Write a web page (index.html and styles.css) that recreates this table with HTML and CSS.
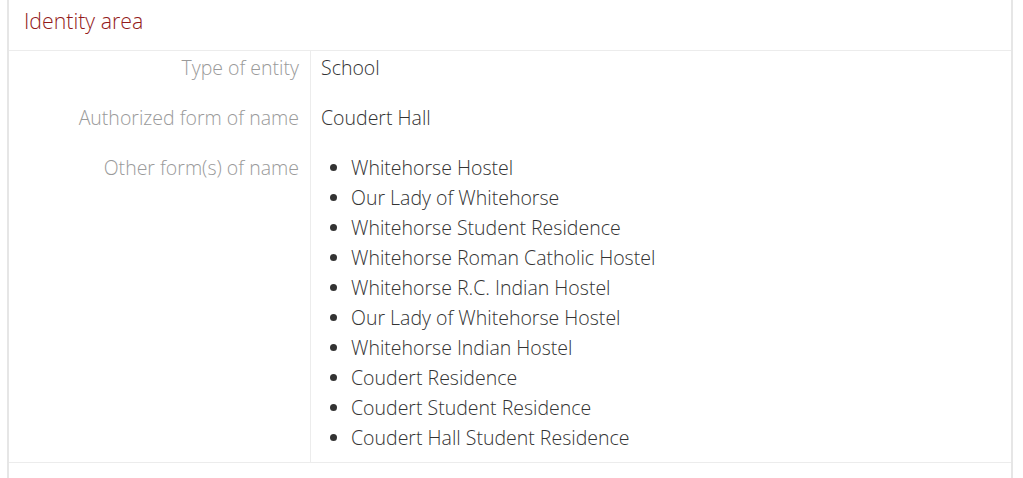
FILE: index.html
```html
<!DOCTYPE html>
<html>
<head>
<meta charset="utf-8">
<link rel="stylesheet" href="styles.css">
</head>
<body>
<section class="area">
  <h2 class="area-title">Identity area</h2>
  <div class="field">
    <div class="label">Type of entity</div>
    <div class="value">School</div>
  </div>
  <div class="field">
    <div class="label">Authorized form of name</div>
    <div class="value">Coudert Hall</div>
  </div>
  <div class="field field-list">
    <div class="label">Other form(s) of name</div>
    <div class="value">
      <ul class="names">
        <li>Whitehorse Hostel</li>
        <li>Our Lady of Whitehorse</li>
        <li>Whitehorse Student Residence</li>
        <li>Whitehorse Roman Catholic Hostel</li>
        <li>Whitehorse R.C. Indian Hostel</li>
        <li>Our Lady of Whitehorse Hostel</li>
        <li>Whitehorse Indian Hostel</li>
        <li>Coudert Residence</li>
        <li>Coudert Student Residence</li>
        <li>Coudert Hall Student Residence</li>
      </ul>
    </div>
  </div>
  <div class="tail"></div>
</section>
</body>
</html>
```
FILE: styles.css
```css
html, body {
  margin: 0;
  padding: 0;
  background: #fff;
}
body {
  font-family: "Open Sans", "Liberation Sans", sans-serif;
  font-weight: 300;
  color: #333;
}
.area {
  margin-left: 7px;
  width: 1002px;
  border-left: 2px solid #e6e6e6;
  border-right: 2px solid #e6e6e6;
  min-height: 478px;
}
.area-title {
  margin: 0;
  padding: 6px 15px 14px;
  font-size: 21.3px;
  line-height: 30px;
  font-weight: 300;
  color: #931a1a;
  border-bottom: 1px solid #ececec;
}
.field {
  display: flex;
  font-size: 19.5px;
  line-height: 30px;
}
.label {
  width: 290px;
  flex: none;
  padding: 2px 11px 18px 0;
  text-align: right;
  color: #9a9a9a;
}
.value {
  flex: 1;
  border-left: 1px solid #ececec;
  padding: 2px 10px 18px;
  color: #333;
}
.field-list .label,
.field-list .value {
  padding-bottom: 9px;
}
.names {
  margin: 0;
  padding-left: 30px;
}
.tail {
  border-top: 1px solid #ececec;
}
```
